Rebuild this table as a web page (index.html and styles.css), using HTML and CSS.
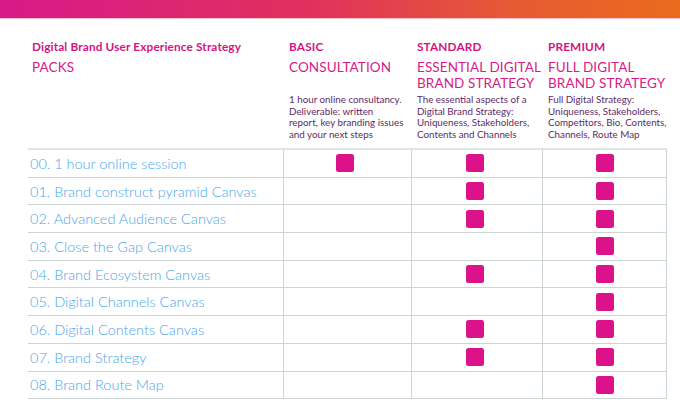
FILE: index.html
```html
<!DOCTYPE html>
<html>
<head>
<meta charset="utf-8">
<link rel="stylesheet" href="styles.css">
</head>
<body>
<div class="topbar"></div>
<div class="page">
  <div class="head">
    <div class="hcell first">
      <div class="tier">Digital Brand User Experience Strategy</div>
      <div class="title">PACKS</div>
    </div>
    <div class="hcell">
      <div class="tier">BASIC</div>
      <div class="title">CONSULTATION</div>
      <div class="desc">1 hour online consultancy.<br>Deliverable: written<br>report, key branding issues<br>and your next steps</div>
    </div>
    <div class="hcell">
      <div class="tier">STANDARD</div>
      <div class="title">ESSENTIAL DIGITAL BRAND STRATEGY</div>
      <div class="desc">The essential aspects of a Digital Brand Strategy: Uniqueness, Stakeholders, Contents and Channels</div>
    </div>
    <div class="hcell">
      <div class="tier">PREMIUM</div>
      <div class="title">FULL DIGITAL BRAND STRATEGY</div>
      <div class="desc">Full Digital Strategy: Uniqueness, Stakeholders, Competitors, Bio, Contents, Channels, Route Map</div>
    </div>
  </div>
  <div class="table">
    <div class="row"><div class="name">00. 1 hour online session</div><div class="c"><span class="sq"></span></div><div class="c"><span class="sq"></span></div><div class="c"><span class="sq"></span></div></div>
    <div class="row"><div class="name">01. Brand construct pyramid Canvas</div><div class="c"></div><div class="c"><span class="sq"></span></div><div class="c"><span class="sq"></span></div></div>
    <div class="row"><div class="name">02. Advanced Audience Canvas</div><div class="c"></div><div class="c"><span class="sq"></span></div><div class="c"><span class="sq"></span></div></div>
    <div class="row"><div class="name">03. Close the Gap Canvas</div><div class="c"></div><div class="c"></div><div class="c"><span class="sq"></span></div></div>
    <div class="row"><div class="name">04. Brand Ecosystem Canvas</div><div class="c"></div><div class="c"><span class="sq"></span></div><div class="c"><span class="sq"></span></div></div>
    <div class="row"><div class="name">05. Digital Channels Canvas</div><div class="c"></div><div class="c"></div><div class="c"><span class="sq"></span></div></div>
    <div class="row"><div class="name">06. Digital Contents Canvas</div><div class="c"></div><div class="c"><span class="sq"></span></div><div class="c"><span class="sq"></span></div></div>
    <div class="row"><div class="name">07. Brand Strategy</div><div class="c"></div><div class="c"><span class="sq"></span></div><div class="c"><span class="sq"></span></div></div>
    <div class="row"><div class="name">08. Brand Route Map</div><div class="c"></div><div class="c"></div><div class="c"><span class="sq"></span></div></div>
  </div>
</div>
</body>
</html>
```
FILE: styles.css
```css
html, body {
  margin: 0;
  padding: 0;
  background: #ffffff;
}
body {
  font-family: "Lato", "Liberation Sans", sans-serif;
  width: 680px;
  height: 409px;
  overflow: hidden;
}
.topbar {
  height: 18px;
  background: linear-gradient(90deg, #d8198a 0%, #e0305e 45%, #e65a34 75%, #ea6b1d 100%);
  border-bottom: 1px solid #f6c2cc;
}
.page {
  padding-left: 28px;
  width: 639px;
}
.head {
  display: grid;
  grid-template-columns: 255px 128px 131px 125px;
  padding-top: 21px;
  box-sizing: border-box;
  height: 129px;
}
.hcell {
  padding-left: 6px;
}
.hcell.first {
  padding-left: 4px;
}
.tier {
  font-weight: 700;
  font-size: 11.8px;
  color: #d4147f;
  line-height: 14px;
  letter-spacing: 0.15px;
}
.title {
  font-weight: 400;
  font-size: 13.5px;
  color: #d61c86;
  line-height: 16px;
  margin-top: 5px;
  letter-spacing: 0.1px;
}
.desc {
  font-size: 9.8px;
  line-height: 11.7px;
  color: #5c2c68;
  margin-top: 3px;
  max-width: 120px;
}
.hcell:nth-child(2) .desc {
  margin-top: 19px;
  white-space: nowrap;
}
.table {
  border-top: 2px solid #dfe4e4;
}
.row {
  display: grid;
  grid-template-columns: 255px 128px 131px 125px;
  height: 27.7px;
  border-bottom: 1px solid #cdd4d4;
  box-sizing: border-box;
}
.name {
  font-weight: 300;
  font-size: 14.5px;
  color: #48a6ee;
  padding-left: 2px;
  display: flex;
  align-items: center;
}
.c {
  border-left: 1px solid #cdd4d4;
  display: flex;
  align-items: center;
  justify-content: center;
}
.c:last-child {
  border-right: 1px solid #cdd4d4;
}
.row .c:nth-child(2) .sq {
  margin-right: 6px;
}
.row .c:nth-child(3) .sq {
  margin-right: 4px;
}
.sq {
  width: 18px;
  height: 18px;
  border-radius: 2.5px;
  background: #dc128a;
}
```
